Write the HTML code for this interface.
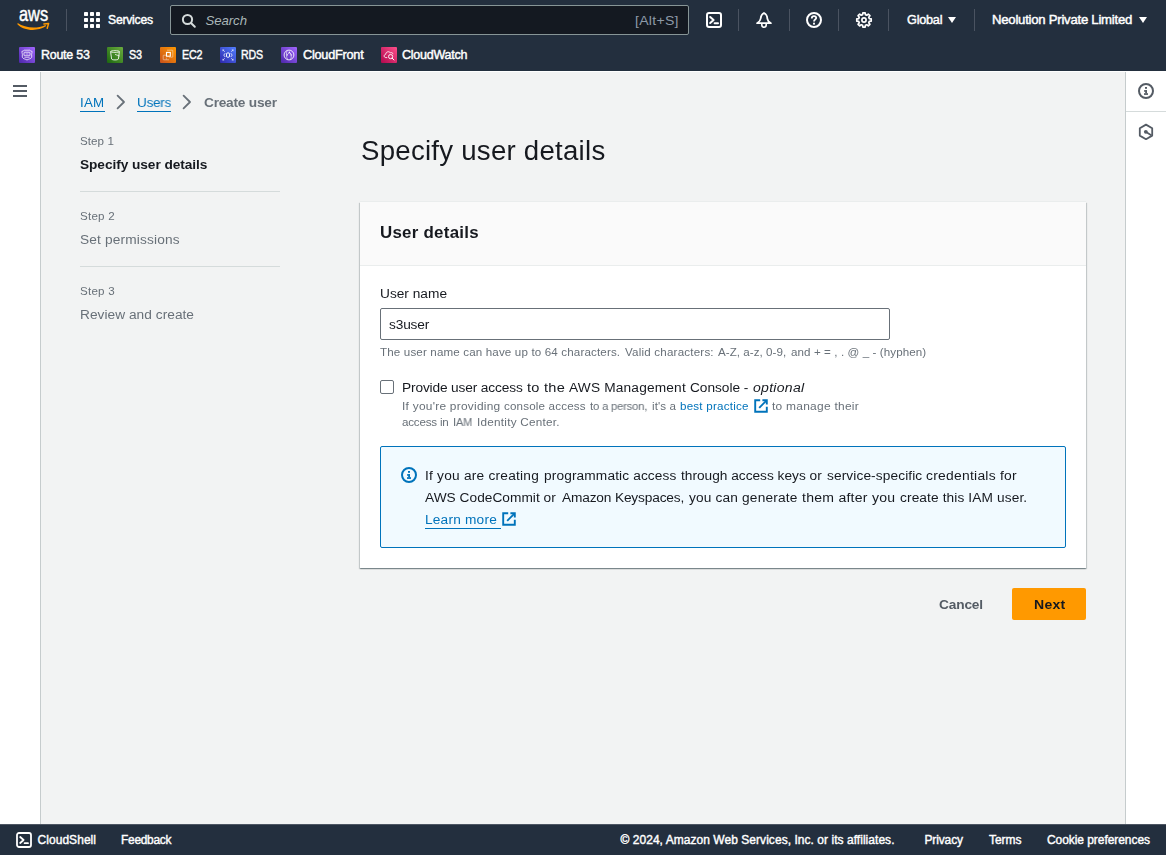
<!DOCTYPE html>
<html lang="en">
<head>
<meta charset="utf-8">
<title>Create user | IAM | Global</title>
<style>
*{box-sizing:border-box;margin:0;padding:0}
html,body{width:1166px;height:855px;overflow:hidden;background:#f2f3f3;font-family:"Liberation Sans",sans-serif;}
.abs{position:absolute}
.g{will-change:transform}
.t{position:absolute;white-space:nowrap;line-height:1;transform-origin:0 50%;font-family:"Liberation Sans",sans-serif;}
#nav{left:0;top:0;width:1166px;height:71px;background:#232f3e}
#navline{left:0;top:71px;width:1166px;height:1px;background:#fff}
.vdiv{position:absolute;top:9px;width:1px;height:22px;background:#4a5361}
#search{left:170px;top:5px;width:519px;height:30px;background:#141921;border:1px solid #879596;border-radius:2px}
.fav{position:absolute;top:47px;width:16px;height:16px;border-radius:1px;overflow:hidden}
#leftrail{left:0;top:72px;width:40px;height:752px;background:#fff}
#leftline{left:40px;top:72px;width:1px;height:752px;background:#c6cccd}
#rightrail{left:1126px;top:72px;width:40px;height:752px;background:#fff}
#rightline{left:1125px;top:72px;width:1px;height:752px;background:#c6cccd}
#rightdiv{left:1126px;top:111px;width:40px;height:1px;background:#d5dbdb}
.hb{position:absolute;left:13px;width:14px;height:2px;background:#545b64}
.stepdiv{position:absolute;left:80px;width:200px;height:1px;background:#d5dbdb}
.ul{position:absolute;height:1px;background:#0073bb}
#card{left:360px;top:202px;width:726px;height:366px;background:#fff;box-shadow:0 1px 1px 0 rgba(0,28,36,.3),1px 1px 1px 0 rgba(0,28,36,.15),-1px 1px 1px 0 rgba(0,28,36,.15)}
#cardhead{left:360px;top:202px;width:726px;height:64px;background:#fafafa;border-bottom:1px solid #eaeded}
#cardtop{left:360px;top:201px;width:726px;height:1px;background:#eaeded}
#input{left:380px;top:308px;width:510px;height:32px;background:#fff;border:1px solid #687078;border-radius:2px}
#check{left:380px;top:380px;width:14px;height:14px;background:#fff;border:1px solid #687078;border-radius:2px}
#info{left:380px;top:446px;width:686px;height:102px;background:#f1faff;border:1px solid #0073bb;border-radius:2px}
#next{left:1012px;top:588px;width:74px;height:32px;background:#ff9900;border-radius:2px}
#footer{left:0;top:824px;width:1166px;height:31px;background:#232f3e;border-top:1px solid #4d5663}
svg{position:absolute;overflow:visible}
</style>
</head>
<body>
<!-- ======= top navigation ======= -->
<div class="abs" id="nav"></div>
<div class="abs" id="navline"></div>

<!-- aws logo -->
<svg style="left:12px;top:4px" width="48" height="32" viewBox="0 0 48 32">
  <text x="6.9" y="16.9" font-family="Liberation Sans, sans-serif" font-size="19.8" fill="#fff" stroke="#fff" stroke-width="0.45" textLength="29.2" lengthAdjust="spacingAndGlyphs">aws</text>
  <path d="M5.7 19 C 12.5 23.6, 24 25.6, 33.4 20.9 L34.3 22.1 C 24.5 28.2, 11.5 26.6, 5.4 20.2 Z" fill="#ff9900"/>
  <path d="M31.9 19.9 L36.6 19.6 L35.2 24.2" fill="none" stroke="#ff9900" stroke-width="1.5" stroke-linejoin="round" stroke-linecap="round"/>
</svg>
<div class="vdiv" style="left:66px"></div>

<!-- services grid -->
<svg style="left:84px;top:12px" width="16" height="16" viewBox="0 0 16 16" fill="#fff">
  <rect x="0" y="0" width="4" height="4" rx="0.7"/><rect x="6" y="0" width="4" height="4" rx="0.7"/><rect x="12" y="0" width="4" height="4" rx="0.7"/>
  <rect x="0" y="6" width="4" height="4" rx="0.7"/><rect x="6" y="6" width="4" height="4" rx="0.7"/><rect x="12" y="6" width="4" height="4" rx="0.7"/>
  <rect x="0" y="12" width="4" height="4" rx="0.7"/><rect x="6" y="12" width="4" height="4" rx="0.7"/><rect x="12" y="12" width="4" height="4" rx="0.7"/>
</svg>

<!-- search -->
<div class="abs" id="search"></div>
<svg style="left:181px;top:12.5px" width="16" height="16" viewBox="0 0 16 16" fill="none" stroke="#d5dbdb" stroke-width="2">
  <circle cx="6.5" cy="6.5" r="4.6"/><path d="M10 10 L13.8 13.8" stroke-linecap="round"/>
</svg>

<!-- cloudshell icon -->
<svg style="left:706px;top:12px" width="16" height="16" viewBox="0 0 16 16" fill="none" stroke="#fff" stroke-width="2">
  <rect x="1" y="1" width="14" height="14" rx="2"/>
  <path d="M4.2 5 L7.6 8 L4.2 11" stroke-linejoin="round" stroke-linecap="round"/><path d="M8.6 11.2 H12" stroke-linecap="round"/>
</svg>
<div class="vdiv" style="left:738px"></div>
<!-- bell -->
<svg style="left:756px;top:11.5px" width="16" height="17" viewBox="0 0 16 17" fill="none" stroke="#fff" stroke-width="1.8" stroke-linejoin="round">
  <path d="M8 1 C5.4 2.2 4.8 4.4 4.6 6.8 C4.4 8.8 3.2 9.9 1.1 11.2 H14.9 C12.8 9.9 11.6 8.8 11.4 6.8 C11.2 4.4 10.6 2.2 8 1 Z"/>
  <path d="M5.8 11.6 V13 a2.2 2.2 0 0 0 4.4 0 V11.6" stroke-width="1.6"/>
</svg>
<div class="vdiv" style="left:789px"></div>
<!-- help -->
<svg style="left:806px;top:12px" width="16" height="16" viewBox="0 0 16 16" fill="none" stroke="#fff" stroke-width="2">
  <circle cx="8" cy="8" r="7"/>
  <path d="M5.8 6.4 C5.8 4.9 6.9 4.1 8 4.1 C9.2 4.1 10.2 4.9 10.2 6.1 C10.2 7.5 8 7.7 8 9.4" stroke-width="1.8" stroke-linecap="butt"/>
  <rect x="7.05" y="10.7" width="1.9" height="1.9" fill="#fff" stroke="none"/>
</svg>
<div class="vdiv" style="left:838px"></div>
<!-- gear -->
<svg style="left:856px;top:12px" width="16" height="16" viewBox="0 0 16 16" fill="none" stroke="#fff" stroke-linejoin="round">
  <path d="M6.58 2.69 L6.86 0.79 L9.14 0.79 L9.42 2.69 L10.75 3.24 L12.29 2.09 L13.91 3.71 L12.76 5.25 L13.31 6.58 L15.21 6.86 L15.21 9.14 L13.31 9.42 L12.76 10.75 L13.91 12.29 L12.29 13.91 L10.75 12.76 L9.42 13.31 L9.14 15.21 L6.86 15.21 L6.58 13.31 L5.25 12.76 L3.71 13.91 L2.09 12.29 L3.24 10.75 L2.69 9.42 L0.79 9.14 L0.79 6.86 L2.69 6.58 L3.24 5.25 L2.09 3.71 L3.71 2.09 L5.25 3.24 Z" stroke-width="1.7"/>
  <circle cx="8" cy="8" r="2.1" stroke-width="1.7"/>
</svg>
<div class="vdiv" style="left:888px"></div>
<svg style="left:948px;top:17px" width="8" height="6" viewBox="0 0 8 6"><path d="M0 0 H8 L4 6 Z" fill="#fff"/></svg>
<div class="vdiv" style="left:974px"></div>
<svg style="left:1139px;top:17px" width="8" height="6" viewBox="0 0 8 6"><path d="M0 0 H8 L4 6 Z" fill="#fff"/></svg>

<!-- ======= favorites bar ======= -->
<!-- Route 53 -->
<svg class="fav" style="left:19px;top:47px" width="16" height="16" viewBox="0 0 16 16">
  <defs><linearGradient id="g1" x1="0" y1="1" x2="1" y2="0"><stop offset="0" stop-color="#4d27aa"/><stop offset="1" stop-color="#a166ff"/></linearGradient></defs>
  <rect width="16" height="16" fill="url(#g1)"/>
  <path d="M2.9 4.4 C4 4.3 4.6 3.9 5.1 3.2 H10.9 C11.4 3.9 12 4.3 13.1 4.4 C13.1 6 12.6 6.6 12.6 7.6 C12.6 8.8 13 9.4 12.6 10.4 C12 11.8 9.6 12 8 13 C6.4 12 4 11.8 3.4 10.4 C3 9.4 3.4 8.8 3.4 7.6 C3.4 6.6 2.9 6 2.9 4.4 Z" fill="none" stroke="#fff" stroke-width="0.85" opacity=".9"/>
  <rect x="5" y="5.2" width="6" height="3.6" rx="0.8" fill="none" stroke="#fff" stroke-width="0.85" opacity=".95"/>
  <path d="M5.4 10.4 H10.6 M6.6 7 H9.4" stroke="#fff" stroke-width="0.7" opacity=".8"/>
</svg>
<!-- S3 -->
<svg class="fav" style="left:107px;top:47px" width="16" height="16" viewBox="0 0 16 16">
  <defs><linearGradient id="g2" x1="0" y1="1" x2="1" y2="0"><stop offset="0" stop-color="#1b660f"/><stop offset="1" stop-color="#6cae3e"/></linearGradient></defs>
  <rect width="16" height="16" fill="url(#g2)"/>
  <path d="M3.6 4.6 C3.6 3.4 12.4 3.4 12.4 4.6 L11.4 12 C11.2 13.2 4.8 13.2 4.6 12 Z" fill="none" stroke="#fff" stroke-width="0.9" opacity=".95"/>
  <path d="M3.6 4.6 C3.8 5.8 12.2 5.8 12.4 4.6" fill="none" stroke="#fff" stroke-width="0.8" opacity=".9"/>
  <path d="M8 7.4 L12.6 9" stroke="#fff" stroke-width="0.8" opacity=".9"/>
</svg>
<!-- EC2 -->
<svg class="fav" style="left:160px;top:47px" width="16" height="16" viewBox="0 0 16 16">
  <defs><linearGradient id="g3" x1="0" y1="1" x2="1" y2="0"><stop offset="0" stop-color="#c8511b"/><stop offset="1" stop-color="#ff9900"/></linearGradient></defs>
  <rect width="16" height="16" fill="url(#g3)"/>
  <path d="M7 3.2 H12.2 C12.6 3.2 12.8 3.4 12.8 3.8 V9.6 C12.8 10 12.6 10.2 12.2 10.2 H10.6" fill="none" stroke="#fff" stroke-width="0.8" opacity=".55"/>
  <path d="M9 12.8 H3.8 C3.4 12.8 3.2 12.6 3.2 12.2 V8.8 C3.2 8.4 3.4 8.2 3.8 8.2 H6" fill="none" stroke="#fff" stroke-width="0.8" opacity=".55"/>
  <rect x="6.5" y="5.4" width="3.8" height="3.8" fill="none" stroke="#fff" stroke-width="1.1"/>
  <path d="M6.4 10.6 V12.6 M9.2 10.6 H10.4" stroke="#fff" stroke-width="0.7" opacity=".5"/>
</svg>
<!-- RDS -->
<svg class="fav" style="left:220px;top:47px" width="16" height="16" viewBox="0 0 16 16">
  <defs><linearGradient id="g4" x1="0" y1="1" x2="1" y2="0"><stop offset="0" stop-color="#2e27ad"/><stop offset="1" stop-color="#527fff"/></linearGradient></defs>
  <rect width="16" height="16" fill="url(#g4)"/>
  <rect x="6.5" y="5.9" width="3" height="4.4" rx="1.2" fill="none" stroke="#fff" stroke-width="0.95"/>
  <path d="M5.2 6.2 L3.8 8.1 L5.2 10 M10.8 6.2 L12.2 8.1 L10.8 10" fill="none" stroke="#fff" stroke-width="0.85" opacity=".9"/>
  <path d="M2.8 2.8 L4.8 4.8 M13.2 2.8 L11.2 4.8 M2.8 13.2 L4.8 11.2 M13.2 13.2 L11.2 11.2" stroke="#fff" stroke-width="0.8" opacity=".8"/>
  <path d="M2.8 4.2 V2.8 H4.2 M11.8 2.8 H13.2 V4.2 M2.8 11.8 V13.2 H4.2 M11.8 13.2 H13.2 V11.8" fill="none" stroke="#fff" stroke-width="0.7" opacity=".7"/>
</svg>
<!-- CloudFront -->
<svg class="fav" style="left:281px;top:47px" width="16" height="16" viewBox="0 0 16 16">
  <defs><linearGradient id="g5" x1="0" y1="1" x2="1" y2="0"><stop offset="0" stop-color="#4d27aa"/><stop offset="1" stop-color="#a166ff"/></linearGradient></defs>
  <rect width="16" height="16" fill="url(#g5)"/>
  <circle cx="8" cy="8" r="4.9" fill="none" stroke="#fff" stroke-width="0.9" opacity=".95"/>
  <path d="M6.2 3.6 C4.8 6.4 5.4 10 6.6 12.6 M8.4 5.4 C10.6 6.6 10.8 10.6 9.4 12.6 M6.4 7.6 L8.4 5.4 L10 7.4" fill="none" stroke="#fff" stroke-width="0.7" opacity=".85"/>
  <circle cx="8.4" cy="5.4" r="0.8" fill="#fff" opacity=".9"/><circle cx="6.3" cy="8" r="0.7" fill="#fff" opacity=".8"/><circle cx="10.2" cy="8" r="0.7" fill="#fff" opacity=".8"/>
</svg>
<!-- CloudWatch -->
<svg class="fav" style="left:381px;top:47px" width="16" height="16" viewBox="0 0 16 16">
  <defs><linearGradient id="g6" x1="0" y1="1" x2="1" y2="0"><stop offset="0" stop-color="#b0084d"/><stop offset="1" stop-color="#ff4f8b"/></linearGradient></defs>
  <rect width="16" height="16" fill="url(#g6)"/>
  <path d="M6.2 10.6 H4.8 C2.6 10.4 2.6 7.6 4.8 7.2 C4.8 4.8 8 3.8 9.4 5.8 C10.6 5.2 12 6 12 7.2" fill="none" stroke="#fff" stroke-width="0.9" opacity=".95"/>
  <circle cx="9.6" cy="9.6" r="2.1" fill="none" stroke="#fff" stroke-width="0.9"/>
  <path d="M11.2 11.2 L13 13" stroke="#fff" stroke-width="1" stroke-linecap="round"/>
</svg>

<!-- ======= side rails ======= -->
<div class="abs" id="leftrail"></div>
<div class="abs" id="leftline"></div>
<div class="hb" style="top:85px"></div><div class="hb" style="top:90px"></div><div class="hb" style="top:95px"></div>
<div class="abs" id="rightrail"></div>
<div class="abs" id="rightline"></div>
<div class="abs" id="rightdiv"></div>
<!-- right info icon -->
<svg style="left:1138px;top:83px" width="16" height="16" viewBox="0 0 16 16" fill="none" stroke="#545b64" stroke-width="1.8">
  <circle cx="8" cy="8" r="7" stroke-width="2"/>
  <g fill="#545b64" stroke="none"><rect x="7" y="4" width="2" height="1.8"/><rect x="6" y="7.2" width="3" height="1.5"/><rect x="7.2" y="7.2" width="1.8" height="3.2"/><rect x="6" y="10.2" width="4" height="1.7"/></g>
</svg>
<!-- right hexagon icon -->
<svg style="left:1138px;top:123px" width="16" height="18" viewBox="0 0 16 18" fill="none" stroke="#545b64" stroke-width="1.8" stroke-linejoin="round">
  <path d="M8 1.6 L14.2 5.2 V12.6 L8 16.2 L1.8 12.6 V5.2 Z"/>
  <circle cx="7.8" cy="8.8" r="1.9" fill="#545b64" stroke="none"/>
  <path d="M8.5 9.3 L13.6 12.4" stroke-width="1.7"/>
</svg>

<!-- ======= breadcrumbs ======= -->
<div class="ul" style="left:80px;top:111px;width:25px"></div>
<div class="ul" style="left:137px;top:111px;width:34px"></div>
<svg style="left:116px;top:94px" width="10" height="16" viewBox="0 0 10 16" fill="none" stroke="#687078" stroke-width="1.8" stroke-linejoin="round" stroke-linecap="round"><path d="M1.6 1.6 L8 8 L1.6 14.4"/></svg>
<svg style="left:182px;top:94px" width="10" height="16" viewBox="0 0 10 16" fill="none" stroke="#687078" stroke-width="1.8" stroke-linejoin="round" stroke-linecap="round"><path d="M1.6 1.6 L8 8 L1.6 14.4"/></svg>

<!-- ======= wizard steps ======= -->
<div class="stepdiv" style="top:191px"></div>
<div class="stepdiv" style="top:266px"></div>

<!-- ======= card ======= -->
<div class="abs" id="card"></div>
<div class="abs" id="cardtop"></div>
<div class="abs" id="cardhead"></div>
<div class="abs" id="input"></div>
<div class="abs" id="check"></div>
<!-- external link icon (best practice) -->
<svg style="left:754px;top:399px" width="14" height="14" viewBox="0 0 14 14" fill="none" stroke="#0073bb" stroke-width="1.9">
  <path d="M6.2 1.2 H1.2 V12.8 H12.8 V7.8"/><path d="M8.4 1.2 H12.8 V5.6" /><path d="M12.4 1.6 L5.2 8.8"/>
</svg>
<div class="abs" id="info"></div>
<!-- info icon -->
<svg style="left:401px;top:467px" width="16" height="16" viewBox="0 0 16 16" fill="none" stroke="#0073bb" stroke-width="1.8">
  <circle cx="8" cy="8" r="7" stroke-width="2"/>
  <g fill="#0073bb" stroke="none"><rect x="7" y="4" width="2" height="1.8"/><rect x="6" y="7.2" width="3" height="1.5"/><rect x="7.2" y="7.2" width="1.8" height="3.2"/><rect x="6" y="10.2" width="4" height="1.7"/></g>
</svg>
<div class="ul" style="left:425px;top:528px;width:76px"></div>
<svg style="left:502px;top:512px" width="14" height="14" viewBox="0 0 14 14" fill="none" stroke="#0073bb" stroke-width="1.9">
  <path d="M6.2 1.2 H1.2 V12.8 H12.8 V7.8"/><path d="M8.4 1.2 H12.8 V5.6" /><path d="M12.4 1.6 L5.2 8.8"/>
</svg>

<!-- ======= buttons ======= -->
<div class="abs" id="next"></div>

<!-- ======= footer ======= -->
<div class="abs" id="footer"></div>
<svg style="left:16px;top:832px" width="16" height="16" viewBox="0 0 16 16" fill="none" stroke="#fff" stroke-width="1.8">
  <rect x="1" y="1" width="14" height="14" rx="2"/>
  <path d="M4.2 5 L7.6 8 L4.2 11" stroke-linejoin="round" stroke-linecap="round"/><path d="M8.6 11.2 H12" stroke-linecap="round"/>
</svg>

<!-- ======= text ======= -->
<span class="t" style="left:108px;top:13.40px;font-size:13.2px;font-weight:400;color:#ffffff;letter-spacing:-0.250px;transform:scaleX(0.9216);-webkit-text-stroke:0.45px #fff;">Services</span>
<span class="t" style="left:205.5px;top:13.60px;font-size:13.2px;font-weight:400;color:#aab7b8;letter-spacing:-0.059px;font-style:italic;">Search</span>
<span class="t" style="left:635px;top:13.60px;font-size:13.2px;font-weight:400;color:#8d99a8;letter-spacing:0.250px;transform:scaleX(1.0683);">[Alt+S]</span>
<span class="t" style="left:906.5px;top:13.40px;font-size:13.2px;font-weight:400;color:#ffffff;letter-spacing:-0.250px;transform:scaleX(0.9627);-webkit-text-stroke:0.45px #fff;">Global</span>
<span class="t" style="left:992.3px;top:13.40px;font-size:13.2px;font-weight:400;color:#ffffff;letter-spacing:-0.250px;transform:scaleX(0.9978);-webkit-text-stroke:0.45px #fff;">Neolution Private Limited</span>
<span class="t" style="left:40.5px;top:48.20px;font-size:13px;font-weight:400;color:#ffffff;letter-spacing:-0.250px;transform:scaleX(0.9566);-webkit-text-stroke:0.45px #fff;">Route 53</span>
<span class="t" style="left:128.8px;top:48.20px;font-size:13px;font-weight:400;color:#ffffff;letter-spacing:-0.250px;transform:scaleX(0.8303);-webkit-text-stroke:0.45px #fff;">S3</span>
<span class="t" style="left:181.5px;top:48.20px;font-size:13px;font-weight:400;color:#ffffff;letter-spacing:-0.250px;transform:scaleX(0.8227);-webkit-text-stroke:0.45px #fff;">EC2</span>
<span class="t" style="left:241.3px;top:48.20px;font-size:13px;font-weight:400;color:#ffffff;letter-spacing:-0.250px;transform:scaleX(0.8162);-webkit-text-stroke:0.45px #fff;">RDS</span>
<span class="t" style="left:302.6px;top:48.20px;font-size:13px;font-weight:400;color:#ffffff;letter-spacing:-0.250px;transform:scaleX(0.9780);-webkit-text-stroke:0.45px #fff;">CloudFront</span>
<span class="t" style="left:402.2px;top:48.20px;font-size:13px;font-weight:400;color:#ffffff;letter-spacing:-0.250px;transform:scaleX(0.9621);-webkit-text-stroke:0.45px #fff;">CloudWatch</span>
<span class="t g" style="left:80.3px;top:95.80px;font-size:13.2px;font-weight:400;color:#0073bb;letter-spacing:0.250px;transform:scaleX(1.0103);">IAM</span>
<span class="t g" style="left:137px;top:95.80px;font-size:13.7px;font-weight:400;color:#0073bb;letter-spacing:-0.250px;transform:scaleX(0.9842);">Users</span>
<span class="t g" style="left:204.1px;top:95.80px;font-size:13.7px;font-weight:700;color:#687078;letter-spacing:-0.233px;">Create user</span>
<span class="t g" style="left:80.3px;top:135.00px;font-size:11.6px;font-weight:400;color:#687078;letter-spacing:0.074px;">Step 1</span>
<span class="t g" style="left:80.3px;top:157.60px;font-size:13.7px;font-weight:700;color:#16191f;letter-spacing:-0.062px;">Specify user details</span>
<span class="t g" style="left:80.3px;top:210.00px;font-size:11.6px;font-weight:400;color:#687078;letter-spacing:0.214px;">Step 2</span>
<span class="t g" style="left:80.3px;top:232.70px;font-size:13.7px;font-weight:400;color:#687078;letter-spacing:0.152px;">Set permissions</span>
<span class="t g" style="left:80.3px;top:285.00px;font-size:11.6px;font-weight:400;color:#687078;letter-spacing:0.214px;">Step 3</span>
<span class="t g" style="left:80.3px;top:307.70px;font-size:13.7px;font-weight:400;color:#687078;letter-spacing:0.039px;">Review and create</span>
<span class="t g" style="left:360.6px;top:137.70px;font-size:26.8px;font-weight:400;color:#16191f;letter-spacing:0.250px;transform:scaleX(1.0299);">Specify user details</span>
<span class="t g" style="left:380.4px;top:225.00px;font-size:16.7px;font-weight:700;color:#16191f;letter-spacing:0.250px;transform:scaleX(1.0127);">User details</span>
<span class="t g" style="left:380.4px;top:287.00px;font-size:13.7px;font-weight:400;color:#16191f;letter-spacing:0.006px;">User name</span>
<span class="t g" style="left:389.4px;top:318.00px;font-size:13.7px;font-weight:400;color:#16191f;letter-spacing:-0.159px;">s3user</span>
<span class="t g" style="left:380.4px;top:345.90px;font-size:11.6px;font-weight:400;color:#687078;letter-spacing:0.146px;">The user name can have up to 64 characters.</span>
<span class="t g" style="left:625px;top:345.90px;font-size:11.6px;font-weight:400;color:#687078;letter-spacing:0.194px;">Valid characters:</span>
<span class="t g" style="left:717.7px;top:345.90px;font-size:11.6px;font-weight:400;color:#687078;letter-spacing:0.042px;">A-Z, a-z, 0-9,</span>
<span class="t g" style="left:790.5px;top:345.90px;font-size:11.6px;font-weight:400;color:#687078;letter-spacing:0.090px;">and + = , . @ _ - (hyphen)</span>
<span class="t g" style="left:402.3px;top:381.00px;font-size:13.7px;font-weight:400;color:#16191f;letter-spacing:-0.136px;">Provide user access</span>
<span class="t g" style="left:527.4px;top:381.00px;font-size:13.7px;font-weight:400;color:#16191f;letter-spacing:0.250px;transform:scaleX(1.0648);">to the</span>
<span class="t g" style="left:569.1px;top:381.00px;font-size:13.7px;font-weight:400;color:#16191f;letter-spacing:0.179px;">AWS Management</span>
<span class="t g" style="left:690px;top:381.00px;font-size:13.7px;font-weight:400;color:#16191f;letter-spacing:-0.024px;">Console -</span>
<span class="t g" style="left:752.5px;top:381.00px;font-size:13.7px;font-weight:400;color:#16191f;letter-spacing:0.250px;transform:scaleX(1.0281);font-style:italic;">optional</span>
<span class="t g" style="left:402.3px;top:400.10px;font-size:11.6px;font-weight:400;color:#687078;letter-spacing:0.250px;transform:scaleX(1.0266);">If you're providing</span>
<span class="t g" style="left:503.7px;top:400.10px;font-size:11.6px;font-weight:400;color:#687078;letter-spacing:0.180px;">console access</span>
<span class="t g" style="left:590px;top:400.10px;font-size:11.6px;font-weight:400;color:#687078;letter-spacing:-0.250px;transform:scaleX(0.9832);">to a person,</span>
<span class="t g" style="left:652.2px;top:400.10px;font-size:11.6px;font-weight:400;color:#687078;letter-spacing:0.083px;">it's a</span>
<span class="t g" style="left:680.4px;top:400.10px;font-size:11.6px;font-weight:400;color:#0073bb;letter-spacing:0.222px;">best practice</span>
<span class="t g" style="left:772px;top:400.10px;font-size:11.6px;font-weight:400;color:#687078;letter-spacing:0.250px;transform:scaleX(1.0314);">to manage their</span>
<span class="t g" style="left:402.3px;top:416.10px;font-size:11.6px;font-weight:400;color:#687078;letter-spacing:-0.204px;">access in</span>
<span class="t g" style="left:453.2px;top:416.10px;font-size:11.6px;font-weight:400;color:#687078;letter-spacing:-0.250px;transform:scaleX(0.9640);">IAM</span>
<span class="t g" style="left:477.1px;top:416.10px;font-size:11.6px;font-weight:400;color:#687078;letter-spacing:0.250px;transform:scaleX(1.0106);">Identity Center.</span>
<span class="t g" style="left:425.3px;top:469.10px;font-size:13.7px;font-weight:400;color:#16191f;letter-spacing:0.235px;">If you are creating</span>
<span class="t g" style="left:544.2px;top:469.10px;font-size:13.7px;font-weight:400;color:#16191f;letter-spacing:0.129px;">programmatic access</span>
<span class="t g" style="left:680.6px;top:469.10px;font-size:13.7px;font-weight:400;color:#16191f;letter-spacing:-0.002px;">through access keys or</span>
<span class="t g" style="left:826.6px;top:469.10px;font-size:13.7px;font-weight:400;color:#16191f;letter-spacing:0.109px;">service-specific</span>
<span class="t g" style="left:926.3px;top:469.10px;font-size:13.7px;font-weight:400;color:#16191f;letter-spacing:0.250px;transform:scaleX(1.0138);">credentials for</span>
<span class="t g" style="left:425.3px;top:491.00px;font-size:13.7px;font-weight:400;color:#16191f;letter-spacing:0.030px;">AWS CodeCommit or</span>
<span class="t g" style="left:561.7px;top:491.00px;font-size:13.7px;font-weight:400;color:#16191f;letter-spacing:-0.155px;">Amazon Keyspaces,</span>
<span class="t g" style="left:688.5px;top:491.00px;font-size:13.7px;font-weight:400;color:#16191f;letter-spacing:0.168px;">you can generate</span>
<span class="t g" style="left:802.1px;top:491.00px;font-size:13.7px;font-weight:400;color:#16191f;letter-spacing:0.250px;transform:scaleX(1.0259);">them after you</span>
<span class="t g" style="left:899.7px;top:491.00px;font-size:13.7px;font-weight:400;color:#16191f;letter-spacing:0.117px;">create this IAM user.</span>
<span class="t g" style="left:425.3px;top:512.90px;font-size:13.7px;font-weight:400;color:#0073bb;letter-spacing:0.200px;">Learn more</span>
<span class="t g" style="left:938.9px;top:598.20px;font-size:13.7px;font-weight:700;color:#545b64;letter-spacing:-0.158px;">Cancel</span>
<span class="t g" style="left:1034px;top:598.20px;font-size:13.7px;font-weight:700;color:#16191f;letter-spacing:0.250px;transform:scaleX(1.0256);">Next</span>
<span class="t" style="left:37.5px;top:833.90px;font-size:12px;font-weight:400;color:#ffffff;letter-spacing:0.050px;-webkit-text-stroke:0.4px #fff;">CloudShell</span>
<span class="t" style="left:121px;top:833.90px;font-size:12px;font-weight:400;color:#ffffff;letter-spacing:-0.250px;transform:scaleX(0.9911);-webkit-text-stroke:0.4px #fff;">Feedback</span>
<span class="t" style="left:620.5px;top:833.90px;font-size:12px;font-weight:400;color:#ffffff;letter-spacing:0.042px;-webkit-text-stroke:0.4px #fff;">© 2024, Amazon Web Services, Inc. or its affiliates.</span>
<span class="t" style="left:924.5px;top:833.90px;font-size:12px;font-weight:400;color:#ffffff;letter-spacing:-0.141px;-webkit-text-stroke:0.4px #fff;">Privacy</span>
<span class="t" style="left:989px;top:833.90px;font-size:12px;font-weight:400;color:#ffffff;letter-spacing:-0.043px;-webkit-text-stroke:0.4px #fff;">Terms</span>
<span class="t" style="left:1047px;top:833.90px;font-size:12px;font-weight:400;color:#ffffff;letter-spacing:-0.062px;-webkit-text-stroke:0.4px #fff;">Cookie preferences</span>
</body>
</html>
